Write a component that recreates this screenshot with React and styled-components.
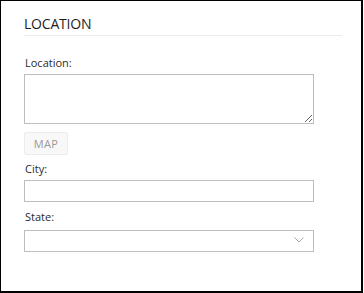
import React from 'react'
import styled, { createGlobalStyle } from 'styled-components'

const Global = createGlobalStyle`
  html, body { margin: 0; padding: 0; background: #fff; }
  body { font-family: "Open Sans", "Liberation Sans", sans-serif; }
`

const Panel = styled.section`
  box-sizing: border-box;
  width: 363px;
  height: 293px;
  border-style: solid;
  border-color: #000;
  border-width: 1px 2px 2px 1px;
  padding: 14px 0 0 23px;
  background: #fff;
`
const Heading = styled.h2`
  width: 318px;
  margin: 0;
  padding-bottom: 3px;
  font-size: 14px;
  line-height: 17px;
  font-weight: 400;
  letter-spacing: -0.2px;
  color: #1e1e1e;
  border-bottom: 1px solid #ebebeb;
`
const Form = styled.form`
  display: flex;
  flex-direction: column;
  align-items: flex-start;
  padding-top: 20px;
`
const Label = styled.label`
  display: block;
  margin: ${p => p.$top || 0}px 0 4px 1px;
  font-size: 11px;
  line-height: 14px;
  color: #2a2a2a;
`
const TextArea = styled.textarea`
  box-sizing: border-box;
  width: 290px;
  height: 50px;
  margin: 0;
  border: 1px solid #bdbdbd;
  border-radius: 0;
  font: inherit;
  outline: none;
`
const MapButton = styled.button`
  box-sizing: border-box;
  width: 44px;
  height: 23px;
  margin-top: 8px;
  padding: 0;
  border: 1px solid #ececec;
  border-radius: 2px;
  background: #f8f8f8;
  color: #9a9a9a;
  font-family: inherit;
  font-size: 11px;
  letter-spacing: 0.3px;
`
const Input = styled.input`
  box-sizing: border-box;
  width: 290px;
  height: 22px;
  margin: 0;
  border: 1px solid #bdbdbd;
  border-radius: 0;
  outline: none;
`
const SelectWrap = styled.div`
  position: relative;
  width: 290px;
  height: 22px;
`
const Select = styled.select`
  box-sizing: border-box;
  width: 100%;
  height: 100%;
  margin: 0;
  border: 1px solid #bdbdbd;
  border-radius: 0;
  background: #fff;
  appearance: none;
  outline: none;
`
const Chevron = styled.svg`
  position: absolute;
  right: 10px;
  top: 9px;
  pointer-events: none;
`

export default function App() {
  return (
    <>
      <Global />
      <Panel>
        <Heading>LOCATION</Heading>
        <Form>
          <Label>Location:</Label>
          <TextArea />
          <MapButton type="button">MAP</MapButton>
          <Label $top={7}>City:</Label>
          <Input />
          <Label $top={8}>State:</Label>
          <SelectWrap>
            <Select defaultValue="">
              <option value=""></option>
            </Select>
            <Chevron width="10" height="6" viewBox="0 0 10 6">
              <path d="M0.5 0.5 L5 5 L9.5 0.5" fill="none" stroke="#a8a8a8" strokeWidth="1" />
            </Chevron>
          </SelectWrap>
        </Form>
      </Panel>
    </>
  )
}
